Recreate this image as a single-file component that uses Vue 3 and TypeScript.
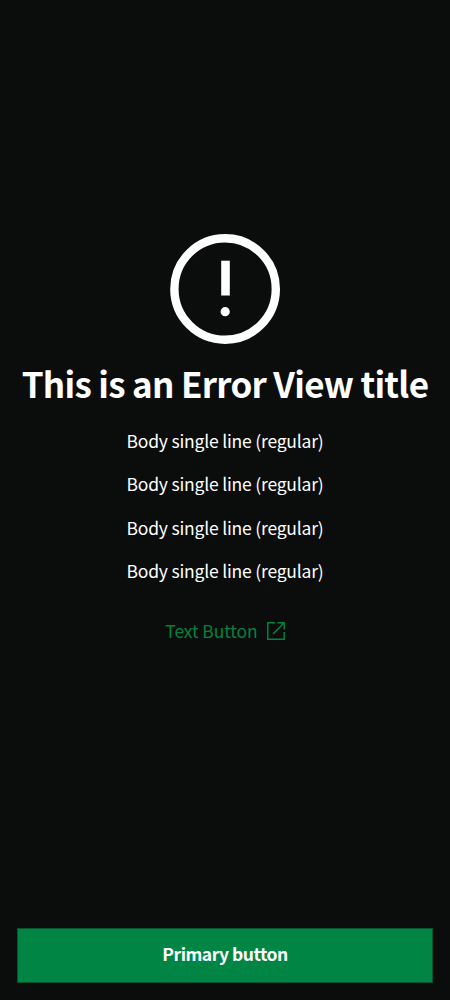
<script setup lang="ts">
const lines: string[] = Array.from({ length: 4 }, () => 'Body single line (regular)')
</script>

<template>
  <main class="screen">
    <section class="content">
      <svg class="error-icon" viewBox="0 0 110 110" aria-hidden="true">
        <circle cx="55.1" cy="55" r="50.7" fill="none" stroke="currentColor" stroke-width="8.4" />
        <rect x="51.2" y="26.7" width="8.6" height="34.8" fill="currentColor" />
        <circle cx="55.2" cy="77.7" r="4.6" fill="currentColor" />
      </svg>
      <h1 class="title"><span>This is an Error View title</span></h1>
      <p v-for="(line, i) in lines" :key="i" class="body-line"><span>{{ line }}</span></p>
      <button class="text-button" type="button">
        <span class="link-label">Text Button</span>
        <svg class="link-icon" viewBox="0 0 18 18" aria-hidden="true">
          <path d="M8 .8H.8v16.4h16.4V10M10.5 .8h6.7v6.7M17.2.8 6 12" fill="none" stroke="currentColor" stroke-width="1.5" />
        </svg>
      </button>
    </section>
    <button class="primary-button" type="button"><span>Primary button</span></button>
  </main>
</template>

<style>
body {
  background: #0b0d0c;
}
</style>

<style scoped>
.screen {
  box-sizing: border-box;
  display: flex;
  flex-direction: column;
  width: 450px;
  height: 1000px;
  padding: 234px 17px 17px;
  background: #0b0d0c;
  color: #fff;
  font-family: "Noto Sans CJK JP", "Noto Sans", sans-serif;
}
.content {
  flex: 1;
  display: flex;
  flex-direction: column;
  align-items: center;
}
.error-icon {
  width: 110px;
  height: 110px;
}
.title {
  margin: 17px 0 14px;
  font-size: 35px;
  line-height: 44px;
  font-weight: 700;
  letter-spacing: -0.72px;
  white-space: nowrap;
}
.body-line {
  margin: 8px 0;
  font-size: 17.5px;
  line-height: 27.4px;
  letter-spacing: -0.2px;
  white-space: nowrap;
}
.text-button {
  display: flex;
  align-items: center;
  gap: 9px;
  margin-top: 24px;
  padding: 0;
  border: 0;
  background: none;
  color: #00823f;
  font: 17.5px/27px "Noto Sans CJK JP", "Noto Sans", sans-serif;
  letter-spacing: -0.1px;
}
.link-icon {
  width: 18px;
  height: 18px;
  margin-top: 2px;
}
.primary-button {
  flex: none;
  box-sizing: border-box;
  width: 416px;
  height: 55px;
  padding: 0 0 5px;
  border: 1px solid #06562f;
  background: #008545;
  color: #fff;
  font: 700 17.5px/27px "Noto Sans CJK JP", "Noto Sans", sans-serif;
  letter-spacing: -0.5px;
}
</style>
